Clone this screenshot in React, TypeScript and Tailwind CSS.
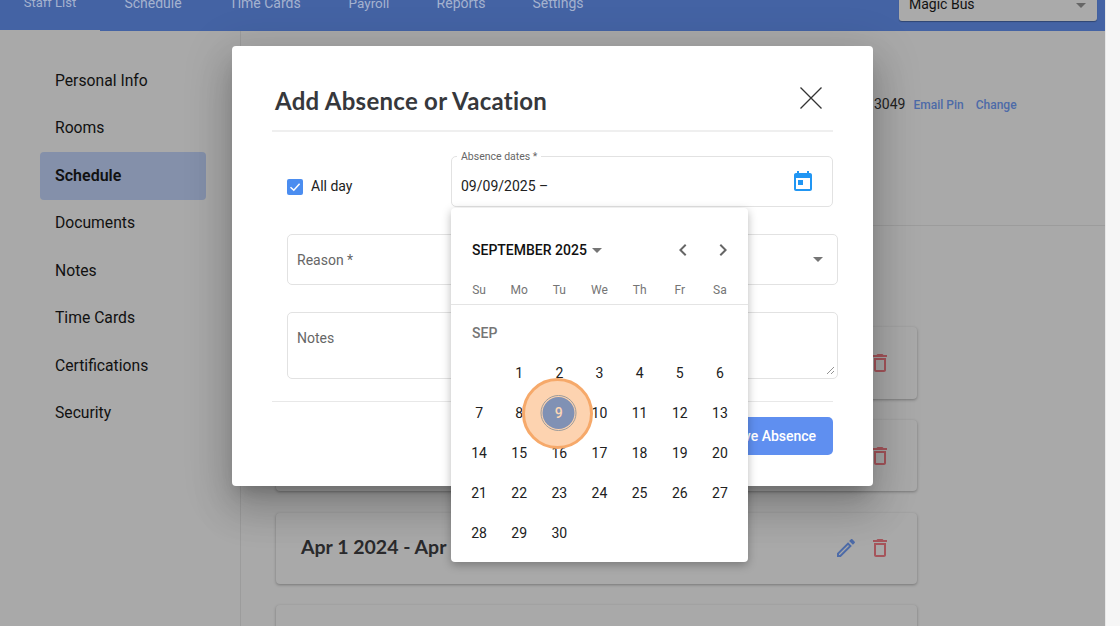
const roboto = "font-['Roboto',sans-serif]";

const tabs = [
  ["Staff List", "w-[100px]", "text-[13px]"],
  ["Schedule", "w-[106px]", "text-[14px]"],
  ["Time Cards", "w-[118px]", "text-[14px]"],
  ["Payroll", "w-[90px]", "text-[13.5px]"],
  ["Reports", "w-[94px]", "text-[14px]"],
  ["Settings", "w-[100px]", "text-[14px]"],
];
const sideItems = ["Personal Info", "Rooms", "Schedule", "Documents", "Notes", "Time Cards", "Certifications", "Security"];
const weekdays = ["Su", "Mo", "Tu", "We", "Th", "Fr", "Sa"];
const weeks: (number | null)[][] = [
  [null, 1, 2, 3, 4, 5, 6],
  [7, 8, 9, 10, 11, 12, 13],
  [14, 15, 16, 17, 18, 19, 20],
  [21, 22, 23, 24, 25, 26, 27],
  [28, 29, 30, null, null, null, null],
];

function Trash() {
  return (
    <svg viewBox="0 0 24 24" className="w-[24px] h-[24px] fill-[#a5555b]">
      <path d="M6 19c0 1.1.9 2 2 2h8c1.1 0 2-.9 2-2V7H6v12zM8 9h8v10H8V9zm7.5-5l-1-1h-5l-1 1H5v2h14V4z" />
    </svg>
  );
}

function Pencil() {
  return (
    <svg viewBox="0 0 24 24" className="w-[24px] h-[24px] fill-[#4d6ba8]">
      <path d="M14.06 9.02l.92.92L5.92 19H5v-.92l9.06-9.06M17.66 3c-.25 0-.51.1-.7.29l-1.83 1.83 3.75 3.75 1.83-1.83c.39-.39.39-1.02 0-1.41l-2.34-2.34c-.2-.2-.45-.29-.71-.29zm-3.6 3.19L3 17.25V21h3.75L17.81 9.94l-3.75-3.75z" />
    </svg>
  );
}

function Card({ title, pencil, first }: { title?: string; pencil?: boolean; first?: boolean }) {
  return (
    <div className={`${first ? "h-[72px] mb-[21px]" : "h-[71px] mb-[21.5px]"} w-[641px] shrink-0 rounded-[4px] bg-[#a9a9a9] shadow-[0_1px_3px_rgba(0,0,0,0.3)] flex items-center pl-[25px] pr-[25px]`}>
      <span className="font-['Lato',sans-serif] font-bold text-[19.5px] -mt-[2px] text-[#2a2a2c]">{title}</span>
      <div className="ml-auto flex items-center gap-[10px]">
        {pencil && <Pencil />}
        <Trash />
      </div>
    </div>
  );
}

function Calendar() {
  return (
    <div className={`absolute -left-px top-[51px] w-[297px] h-[354px] bg-white rounded-[4px] shadow-[0_3px_10px_rgba(0,0,0,0.28)] z-10 ${roboto}`}>
      <div className="h-[75px] pt-[30px] pl-[21px] pr-[13px] flex items-start">
        <div className="flex items-center h-[24px]">
          <span className="text-[14px] font-medium text-[#111]">SEPTEMBER 2025</span>
          <svg viewBox="0 0 10 5" className="ml-[5px] w-[10px] h-[5px] fill-[#757575]"><path d="M0 0h10L5 5z" /></svg>
        </div>
        <div className="ml-auto flex items-center gap-[16px]">
          <svg viewBox="0 0 24 24" className="w-[24px] h-[24px] fill-[#666]"><path d="M15.41 7.41 14 6l-6 6 6 6 1.41-1.41L10.83 12z" /></svg>
          <svg viewBox="0 0 24 24" className="w-[24px] h-[24px] fill-[#666]"><path d="M8.59 16.59 10 18l6-6-6-6-1.41 1.41L13.17 12z" /></svg>
        </div>
      </div>
      <div className="grid grid-cols-7 px-[8px] pb-[6px] border-b border-[#e4e4e4] h-[15px] box-content">
        {weekdays.map((d) => (
          <span key={d} className="text-center text-[12px] leading-[15px] text-[#757575]">{d}</span>
        ))}
      </div>
      <div className="pl-[21px] pt-[19px] h-[48px] text-[14px] leading-[18px] font-medium text-[#757575]">SEP</div>
      <div className="px-[8px]">
        {weeks.map((w, i) => (
          <div key={i} className="grid grid-cols-7 h-[40px]">
            {w.map((d, j) => (
              <div key={j} className="relative flex items-center justify-center text-[14px] text-[#212121]">
                {d === 9 ? (
                  <span className="absolute -translate-x-[2px] w-[71px] h-[71px] rounded-full bg-[#fdd3b0] border-[3px] border-[#f6a96a] flex items-center justify-center z-10">
                    <span className="translate-x-[1.5px] w-[36px] h-[36px] rounded-full border border-[#9b9b9b] flex items-center justify-center">
                      <span className="w-[32px] h-[32px] rounded-full bg-[#8091b4] flex items-center justify-center font-medium text-[#fbd6b5]">9</span>
                    </span>
                  </span>
                ) : (
                  d
                )}
              </div>
            ))}
          </div>
        ))}
      </div>
    </div>
  );
}

function Modal() {
  return (
    <div className={`absolute left-[232px] top-[46px] w-[641px] h-[440px] bg-white rounded-[4px] shadow-[0_11px_15px_-7px_rgba(0,0,0,0.2),0_24px_38px_3px_rgba(0,0,0,0.14),0_9px_46px_8px_rgba(0,0,0,0.12)] px-[40px] flex flex-col ${roboto}`}>
      <div className="h-[86px] shrink-0 border-b-2 border-[#efefef] flex items-start pl-[3px]">
        <h1 className="mt-[36.5px] font-['Lato',sans-serif] font-bold text-[24px] leading-[36px] tracking-[0.27px] text-[#36383c]">Add Absence or Vacation</h1>
        <svg viewBox="0 0 22 22" className="ml-auto mt-[41px] mr-[11px] w-[22px] h-[22px] stroke-[#333] fill-none stroke-[1.3]">
          <path d="M0.5 0.5 21.5 21.5M21.5 0.5 0.5 21.5" />
        </svg>
      </div>
      <div className="mt-[24px] flex items-stretch h-[51px] shrink-0">
        <div className="w-[179px] flex items-center pl-[15px] pt-[10px]">
          <span className="w-[16px] h-[16px] rounded-[2px] bg-[#4b8df0] flex items-center justify-center">
            <svg viewBox="0 0 16 16" className="w-[16px] h-[16px] stroke-white fill-none stroke-[1.5]"><path d="M3.5 8.2 6.8 11.3 12.6 4.8" /></svg>
          </span>
          <span className="ml-[8px] text-[14px] text-[#212121]">All day</span>
        </div>
        <div className="relative w-[382px] border border-[#e2e2e2] rounded-[5px] flex items-center pl-[9px] pr-[17px]">
          <span className="absolute left-[5px] -top-[5px] bg-white px-[4px] text-[10.5px] leading-[10px] text-[#666]">Absence dates *</span>
          <span className="text-[14px] text-[#212121] mt-[9px]">09/09/2025 –</span>
          <svg viewBox="0 0 24 24" className="ml-auto w-[24px] h-[24px] fill-[#2196f3]">
            <path d="M19 3h-1V1h-2v2H8V1H6v2H5c-1.11 0-1.99.9-1.99 2L3 19c0 1.1.89 2 2 2h14c1.1 0 2-.9 2-2V5c0-1.1-.9-2-2-2zm0 16H5V8h14v11zM7 10h5v5H7z" />
          </svg>
          <Calendar />
        </div>
      </div>
      <div className="mt-[27px] ml-[15px] w-[551px] h-[51px] shrink-0 border border-[#e2e2e2] rounded-[5px] flex items-center pl-[9px] pr-[14px] text-[14px] text-[#666]">
        <span className="mt-[1px]">Reason *</span>
        <svg viewBox="0 0 10 5" className="ml-auto w-[10px] h-[5px] fill-[#757575]"><path d="M0 0h10L5 5z" /></svg>
      </div>
      <div className="mt-[27px] ml-[15px] w-[551px] h-[67px] shrink-0 border border-[#e2e2e2] rounded-[5px] relative pl-[9px] pt-[16px] text-[14px] leading-[18px] text-[#666]">
        Notes
        <svg viewBox="0 0 9 9" className="absolute right-[2px] bottom-[3px] w-[9px] h-[9px] stroke-[#777] fill-none stroke-[0.8]">
          <path d="M1 8 8 1M5 8 8 5" />
        </svg>
      </div>
      <div className="mt-[22px] h-px shrink-0 bg-[#e8e8e8]" />
      <button className="mt-[15px] self-end h-[38px] w-[122px] rounded-[5px] bg-[#5f8ff0] text-white text-[14px] font-medium">Save Absence</button>
    </div>
  );
}

export default function App() {
  return (
    <div className={`relative w-[1120px] h-[626px] overflow-hidden flex bg-[#f6f6f6] ${roboto}`}>
      <div className="w-[1105px] h-full flex flex-col bg-[#a9a9a9]">
        <header className="h-[31px] shrink-0 bg-[#4463a4] flex items-start relative">
          <nav className="flex">
            {tabs.map(([t, w, size], i) => (
              <div key={t} className={`${w} h-[31px] flex justify-center ${i === 0 ? "border-b border-[#a9a9a9]" : ""}`}>
                <span className={`-mt-[6px] ${size} leading-[18px] text-[#a4b2cf]`}>{t}</span>
              </div>
            ))}
          </nav>
          <div className="absolute left-[899px] -top-[10px] w-[198px] h-[31px] rounded-[3px] bg-[#aaaaaa] flex items-center pl-[10px] pr-[11px] shadow-[0_1px_1px_rgba(0,0,0,0.3)]">
            <span className="text-[14px] text-[#111] -mt-[3px]">Magic Bus</span>
            <svg viewBox="0 0 10 5" className="ml-auto w-[10px] h-[5px] fill-[#666]"><path d="M0 0h10L5 5z" /></svg>
          </div>
        </header>
        <div className="flex-1 flex min-h-0">
          <aside className="w-[241px] shrink-0 border-r border-[#9c9c9c] pt-[26px] pl-[40px] pr-[34px]">
            {sideItems.map((s) => (
              <div key={s} className={`h-[47.5px] pl-[15px] flex items-center text-[#111] rounded-[4px] ${s === "Schedule" ? "bg-[#8490aa] font-semibold text-[16px]" : "text-[15.7px]"}`}>{s}</div>
            ))}
          </aside>
          <main className="flex-1 min-w-0 flex flex-col overflow-hidden">
            <div className="h-[195px] shrink-0 border-b border-[#9c9c9c] flex items-start pt-[65px] pl-[633px]">
              <span className="text-[14px] leading-[16px] text-[#222]">3049</span>
              <span className="ml-[8px] mt-[1px] text-[12px] leading-[16px] font-medium text-[#4d6ba8]">Email Pin</span>
              <span className="ml-[12px] mt-[1px] text-[12px] leading-[16px] font-medium text-[#4d6ba8]">Change</span>
            </div>
            <div className="flex-1 pl-[35px] pt-[101px] flex flex-col">
              <Card first />
              <Card />
              <Card title="Apr 1 2024 - Apr" pencil />
              <Card />
            </div>
          </main>
        </div>
      </div>
      <div className="w-[15px] h-full bg-[#f6f6f6] border-l border-[#e8e8e8]" />
      <Modal />
    </div>
  );
}
